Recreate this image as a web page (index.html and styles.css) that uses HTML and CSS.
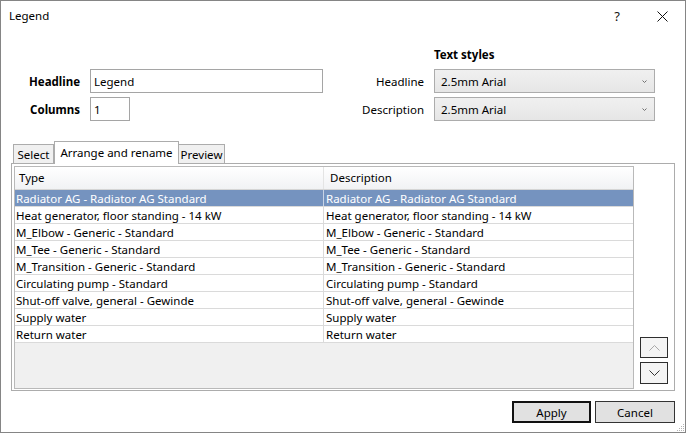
FILE: index.html
```html
<!DOCTYPE html>
<html>
<head>
<meta charset="utf-8">
<title>Legend</title>
<link rel="stylesheet" href="styles.css">
</head>
<body>
<div class="window">
  <div class="titlebar">
    <span class="title">Legend</span>
    <span class="help">?</span>
    <span class="close"><svg width="11" height="11" viewBox="0 0 11 11"><path d="M0.5 0.5L10.5 10.5M10.5 0.5L0.5 10.5" stroke="#111" stroke-width="1" fill="none"/></svg></span>
  </div>

  <div class="form">
    <div class="heading">Text styles</div>
    <div class="lbl bold c1 r2">Headline</div>
    <div class="input c2 r2">Legend</div>
    <div class="lbl c3 r2">Headline</div>
    <div class="select c4 r2"><span>2.5mm Arial</span><svg width="5" height="3" viewBox="0 0 5 3"><path d="M0.5 0.5L2.5 2.5L4.5 0.5" stroke="#707070" fill="none"/></svg></div>
    <div class="lbl bold c1 r3">Columns</div>
    <div class="input narrow c2 r3">1</div>
    <div class="lbl c3 r3">Description</div>
    <div class="select c4 r3"><span>2.5mm Arial</span><svg width="5" height="3" viewBox="0 0 5 3"><path d="M0.5 0.5L2.5 2.5L4.5 0.5" stroke="#707070" fill="none"/></svg></div>
  </div>

  <div class="tabs">
    <div class="tabstrip">
      <div class="tab t-select">Select</div>
      <div class="tab active">Arrange and rename</div>
      <div class="tab t-preview">Preview</div>
    </div>
    <div class="panel">
      <div class="grid">
        <div class="row head"><div class="cell">Type</div><div class="cell">Description</div></div>
        <div class="row sel"><div class="cell">Radiator AG - Radiator AG Standard</div><div class="cell">Radiator AG - Radiator AG Standard</div></div>
        <div class="row"><div class="cell">Heat generator, floor standing - 14 kW</div><div class="cell">Heat generator, floor standing - 14 kW</div></div>
        <div class="row"><div class="cell">M_Elbow - Generic - Standard</div><div class="cell">M_Elbow - Generic - Standard</div></div>
        <div class="row"><div class="cell">M_Tee - Generic - Standard</div><div class="cell">M_Tee - Generic - Standard</div></div>
        <div class="row"><div class="cell">M_Transition - Generic - Standard</div><div class="cell">M_Transition - Generic - Standard</div></div>
        <div class="row"><div class="cell">Circulating pump - Standard</div><div class="cell">Circulating pump - Standard</div></div>
        <div class="row"><div class="cell">Shut-off valve, general - Gewinde</div><div class="cell">Shut-off valve, general - Gewinde</div></div>
        <div class="row"><div class="cell">Supply water</div><div class="cell">Supply water</div></div>
        <div class="row"><div class="cell">Return water</div><div class="cell">Return water</div></div>
      </div>
      <div class="movebtns">
        <div class="mbtn up"><svg width="11" height="6" viewBox="0 0 11 6"><path d="M0.5 5.5L5.5 0.5L10.5 5.5" stroke="#a8a8a8" fill="none"/></svg></div>
        <div class="mbtn down"><svg width="11" height="6" viewBox="0 0 11 6"><path d="M0.5 0.5L5.5 5.5L10.5 0.5" stroke="#333" fill="none"/></svg></div>
      </div>
    </div>
  </div>

  <div class="footer">
    <button class="btn default">Apply</button>
    <button class="btn cancel">Cancel</button>
  </div>

  <svg class="grip" width="9" height="9" viewBox="0 0 9 9">
    <g fill="#b4b4b4">
      <rect x="7" y="1" width="1" height="1"/>
      <rect x="5" y="3" width="1" height="1"/><rect x="7" y="3" width="1" height="1"/>
      <rect x="3" y="5" width="1" height="1"/><rect x="5" y="5" width="1" height="1"/><rect x="7" y="5" width="1" height="1"/>
      <rect x="1" y="7" width="1" height="1"/><rect x="3" y="7" width="1" height="1"/><rect x="5" y="7" width="1" height="1"/><rect x="7" y="7" width="1" height="1"/>
    </g>
  </svg>
</div>
</body>
</html>
```

FILE: styles.css
```css
* { box-sizing: border-box; }
html, body { margin: 0; padding: 0; background: #fff; }
body {
  font-family: "Noto Sans", "Open Sans", sans-serif;
  font-size: 11.5px;
  line-height: 16px;
  color: #000;
}
.window {
  width: 686px;
  height: 433px;
  border: 1px solid #858585;
  display: flex;
  flex-direction: column;
  position: relative;
  background: #fff;
}
.titlebar {
  height: 30px;
  display: flex;
  align-items: center;
}
.title { flex: 1; padding-left: 8px; }
.help { width: 46px; text-align: center; font-size: 13px; color: #111; }
.close { width: 45px; display: flex; justify-content: center; align-items: center; }

.form {
  padding: 15px 0 0 19px;
  display: grid;
  grid-template-columns: 60px 233px 91px 221px;
  grid-template-rows: 19px 24px 24px;
  column-gap: 10px;
  row-gap: 4px;
}
.heading { grid-column: 4; grid-row: 1; font-weight: bold; align-self: start; padding-top: 1px; }
.c1 { grid-column: 1; }
.c2 { grid-column: 2; }
.c3 { grid-column: 3; }
.c4 { grid-column: 4; }
.r2 { grid-row: 2; }
.r3 { grid-row: 3; }
.lbl { text-align: right; align-self: center; padding-top: 2px; }
.bold { font-weight: bold; }
.input {
  border: 1px solid #a5a5a5;
  padding: 1px 3px 0;
  display: flex;
  align-items: center;
  background: #fff;
}
.narrow { width: 40px; }
.select {
  border: 1px solid #acacac;
  background: linear-gradient(#f0f0f0, #e6e6e6);
  display: flex;
  align-items: center;
  justify-content: space-between;
  padding: 1px 7px 0 6px;
}

.tabs { margin-top: 20px; padding: 0 10px; }
.tabstrip {
  display: flex;
  align-items: flex-end;
  height: 22px;
  padding-left: 2px;
}
.tab {
  height: 19px;
  border: 1px solid #acacac;
  border-bottom: none;
  background: #f0f0f0;
  display: flex;
  align-items: center;
  justify-content: center;
  padding-top: 1px;
}
.t-select { width: 41px; }
.t-preview { width: 46px; border-left: none; }
.tab.active {
  width: 125px;
  height: 23px;
  margin-bottom: -1px;
  background: #fff;
  position: relative;
  z-index: 1;
  padding-top: 0;
  padding-bottom: 1px;
}
.panel {
  height: 228px;
  border: 1px solid #acacac;
  display: flex;
  padding: 2px 0 1px 2px;
}
.grid {
  width: 620px;
  border: 1px solid #b9b9b9;
  background: #f0f0f0;
  display: flex;
  flex-direction: column;
}
.row {
  display: flex;
  height: 17px;
  background: #fff;
  border-bottom: 1px solid #dadada;
}
.cell {
  width: 309px;
  padding-left: 1px;
  padding-top: 1px;
  white-space: nowrap;
  overflow: hidden;
  line-height: 15px;
}
.cell:first-child { border-right: 1px solid #dadada; }
.cell + .cell { padding-left: 2px; }
.row.head {
  height: 23px;
  background: linear-gradient(#ffffff, #f1f2f4);
  border-bottom: 1px solid #d5d5d5;
}
.row.head .cell { padding-left: 4px; padding-top: 0; line-height: 22px; border-right-color: #e4e4e4; }
.row.head .cell + .cell { padding-left: 6px; }
.row.sel { background: #7593bf; color: #fff; }
.row.sel .cell:first-child { border-right-color: #c8d4e6; }

.movebtns {
  display: flex;
  flex-direction: column;
  gap: 4px;
  margin-left: 6px;
  align-self: flex-end;
  margin-bottom: 5px;
}
.mbtn {
  width: 28px;
  height: 21px;
  border: 1px solid #2e2e2e;
  background: #f4f4f4;
  display: flex;
  align-items: center;
  justify-content: center;
}
.mbtn.down { height: 22px; }

.footer {
  display: flex;
  justify-content: flex-end;
  gap: 4px;
  padding: 10px 10px 0;
}
.btn {
  height: 22px;
  background: #e1e1e1;
  border: 1px solid #333;
  font: inherit;
  color: #000;
  padding: 1px 0 0;
}
.btn.default { width: 79px; border: 2px solid #111; }
.btn.cancel { width: 80px; }
.grip { position: absolute; right: 0; bottom: 0; }
```
